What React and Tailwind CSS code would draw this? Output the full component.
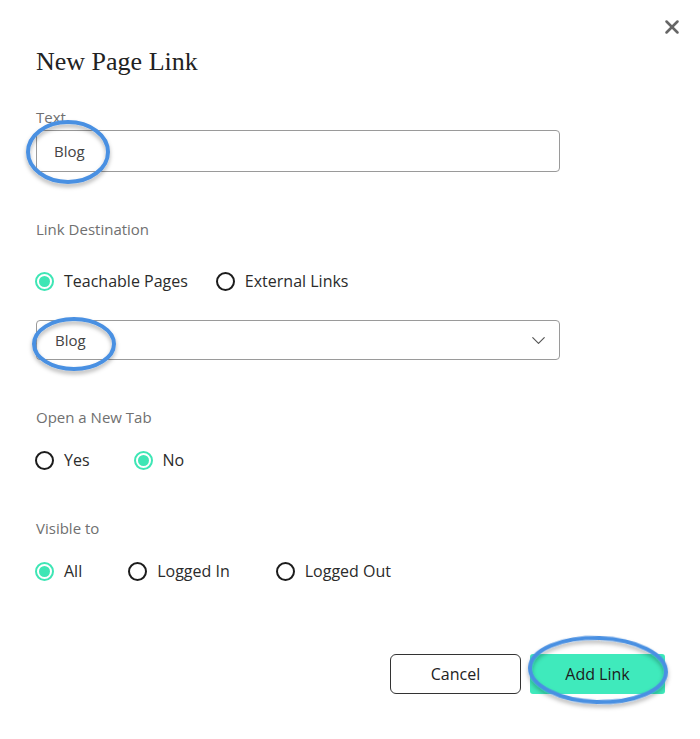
import { X, ChevronDown } from "lucide-react";

function Radio({ label, checked }) {
  return (
    <label className="flex items-center gap-[10px] h-6">
      {checked ? (
        <span className="w-[19px] h-[19px] rounded-full border-2 border-[#3ee6b5] flex items-center justify-center">
          <span className="w-[11px] h-[11px] rounded-full bg-[#3ee6b5]" />
        </span>
      ) : (
        <span className="w-[19px] h-[19px] rounded-full border-2 border-[#1c1c1c]" />
      )}
      <span className="text-[16px] text-[#2b2b2b]">{label}</span>
    </label>
  );
}

export default function App() {
  return (
    <div
      className="relative w-[700px] h-[739px] bg-white overflow-hidden"
      style={{ fontFamily: '"Open Sans", "Noto Sans", sans-serif' }}
    >
      {/* Close */}
      <button className="absolute right-[17px] top-[16px] text-[#666]">
        <X size={22} strokeWidth={2.8} />
      </button>

      <div className="flex flex-col pl-[36px] pt-[46px]">
        <h1
          className="text-[26px] leading-[32px] text-[#222]"
          style={{ fontFamily: '"Liberation Serif", serif' }}
        >
          New Page Link
        </h1>

        {/* Text */}
        <p className="mt-[29px] text-[15px] leading-5 text-[#707070]">Text</p>
        <div className="mt-[3px] w-[524px] h-[42px] border border-[#9a9a9a] rounded-[4px] flex items-center px-[17px]">
          <span className="text-[15px] text-[#444]">Blog</span>
        </div>

        {/* Link destination */}
        <p className="mt-[47px] text-[15px] leading-5 text-[#707070]">Link Destination</p>
        <div className="mt-[30px] flex items-center gap-[28px] -ml-[1px]">
          <Radio label="Teachable Pages" checked />
          <Radio label="External Links" />
        </div>
        <div className="mt-[27px] w-[524px] h-[40px] border border-[#9a9a9a] rounded-[4px] flex items-center justify-between pl-[18px] pr-[9px]">
          <span className="text-[15px] text-[#444]">Blog</span>
          <ChevronDown size={23} strokeWidth={1.2} className="text-[#555]" />
        </div>

        {/* New tab */}
        <p className="mt-[47px] text-[15px] leading-5 text-[#707070]">Open a New Tab</p>
        <div className="mt-[21px] flex items-center gap-[44px] -ml-[1px]">
          <Radio label="Yes" />
          <Radio label="No" checked />
        </div>

        {/* Visible */}
        <p className="mt-[46px] text-[15px] leading-5 text-[#707070]">Visible to</p>
        <div className="mt-[21px] flex items-center gap-[46px] -ml-[1px]">
          <Radio label="All" checked />
          <Radio label="Logged In" />
          <Radio label="Logged Out" />
        </div>

        {/* Actions */}
        <div className="mt-[71px] flex justify-end gap-[9px] pr-[35px]">
          <button className="w-[131px] h-[40px] border border-[#333] rounded-[6px] text-[16px] text-[#222]">
            Cancel
          </button>
          <button className="w-[135px] h-[40px] bg-[#3feabc] rounded-[3px] text-[16px] text-[#1d1d1d]">
            Add Link
          </button>
        </div>
      </div>

      {/* Annotation circles */}
      <svg className="absolute inset-0 pointer-events-none" width="700" height="739">
        <defs>
          <filter id="sh" x="-20%" y="-20%" width="140%" height="150%">
            <feDropShadow dx="0" dy="3" stdDeviation="2" floodColor="#000" floodOpacity="0.3" />
          </filter>
        </defs>
        <g fill="none" stroke="#4a90e2" strokeWidth="4" filter="url(#sh)">
          <ellipse cx="68" cy="152" rx="40" ry="30" />
          <ellipse cx="74" cy="344" rx="40" ry="25" />
          <ellipse cx="598" cy="670" rx="68" ry="32" transform="rotate(2 598 670)" />
        </g>
      </svg>
    </div>
  );
}
